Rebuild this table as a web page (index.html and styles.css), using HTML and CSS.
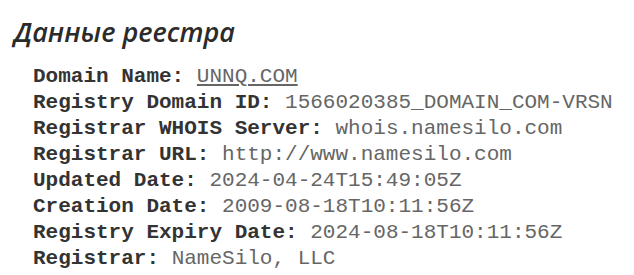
FILE: index.html
```html
<!DOCTYPE html>
<html lang="ru">
<head>
    <meta charset="UTF-8">
    <meta name="viewport" content="width=device-width, initial-scale=1.0">
    <title>Данные реестра</title>
    <link rel="stylesheet" href="styles.css">
</head>
<body>

<div class="registry">
    <h2 class="title">Данные реестра</h2>
    <div class="whois">
        <div class="row"><span class="label">Domain Name:</span> <a class="value link" href="#">UNNQ.COM</a></div>
        <div class="row"><span class="label">Registry Domain ID:</span> <span class="value">1566020385_DOMAIN_COM-VRSN</span></div>
        <div class="row"><span class="label">Registrar WHOIS Server:</span> <span class="value">whois.namesilo.com</span></div>
        <div class="row"><span class="label">Registrar URL:</span> <span class="value">http://www.namesilo.com</span></div>
        <div class="row"><span class="label">Updated Date:</span> <span class="value">2024-04-24T15:49:05Z</span></div>
        <div class="row"><span class="label">Creation Date:</span> <span class="value">2009-08-18T10:11:56Z</span></div>
        <div class="row"><span class="label">Registry Expiry Date:</span> <span class="value">2024-08-18T10:11:56Z</span></div>
        <div class="row"><span class="label">Registrar:</span> <span class="value">NameSilo, LLC</span></div>
    </div>
</div>

</body>
</html>
```

FILE: styles.css
```css
body {
    margin: 0;
    padding: 0;
    background-color: #ffffff;
}
.registry {
    padding: 14px 0 0 14px;
}
.title {
    margin: 0;
    font-family: "Open Sans", sans-serif;
    font-style: italic;
    font-weight: 600;
    font-size: 27px;
    line-height: 36px;
    color: #2b2b2b;
}
.whois {
    margin-top: 14px;
    padding-left: 19px;
    font-family: "Liberation Mono", monospace;
    font-size: 21px;
    line-height: 26px;
    white-space: nowrap;
}
.label {
    font-weight: bold;
    color: #333333;
}
.value {
    color: #666666;
}
.link {
    text-decoration: underline;
}
```
